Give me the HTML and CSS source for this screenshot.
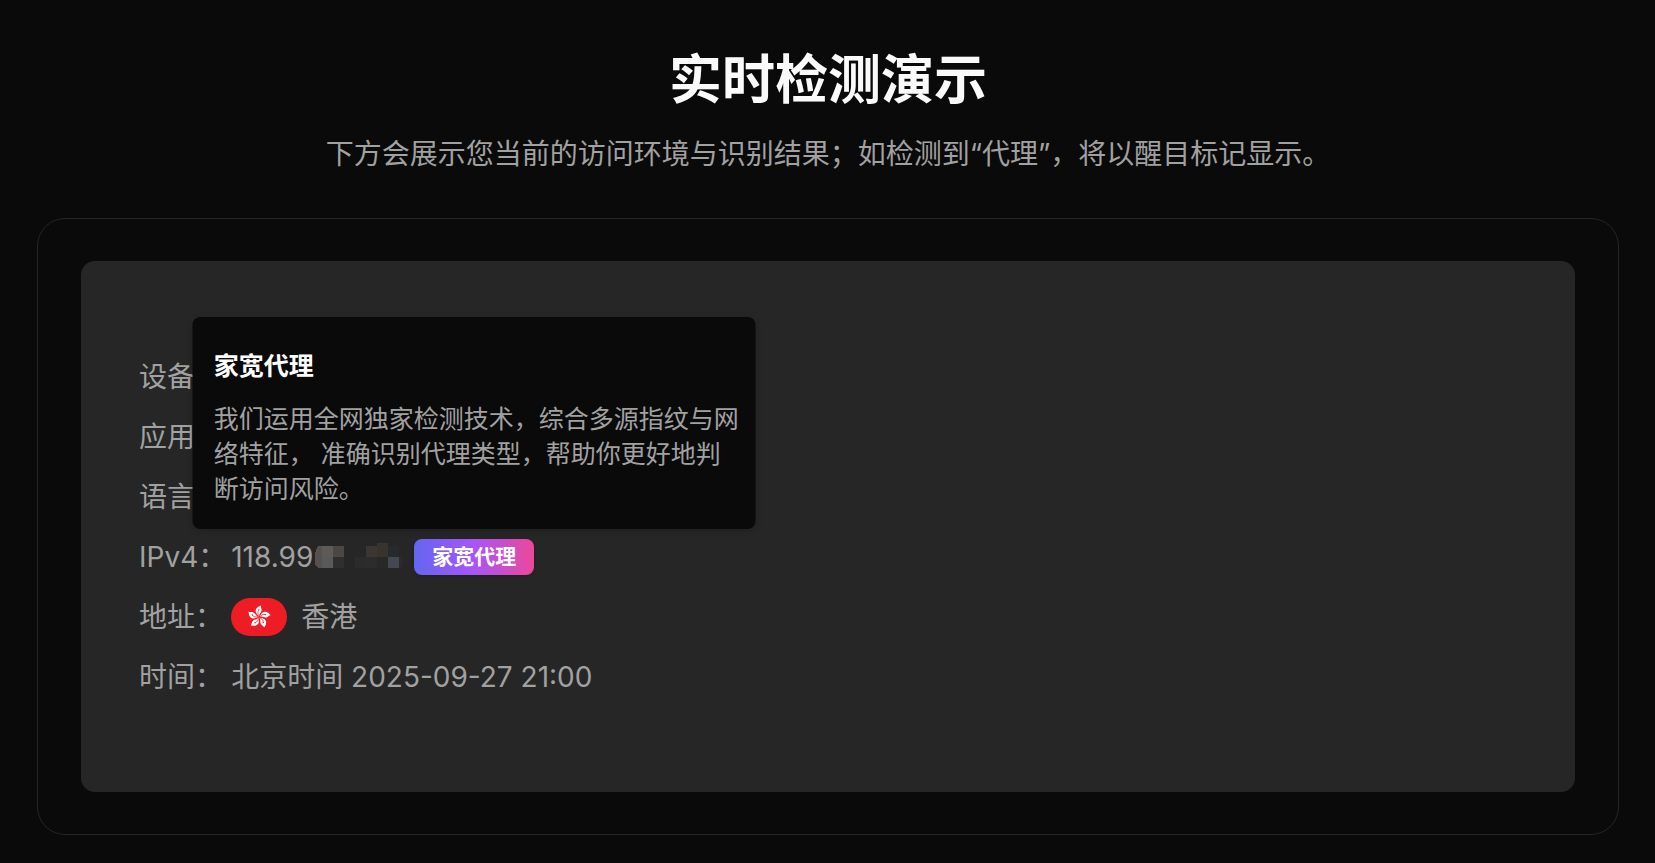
FILE: index.html
```
<!DOCTYPE html>
<html lang="zh-CN">
<head>
    <meta charset="UTF-8">
    <meta name="viewport" content="width=device-width, initial-scale=1.0">
    <title>实时检测演示</title>
    <link rel="stylesheet" href="styles.css">
</head>
<body>

    <main class="demo">
        <header class="demo-header">
            <h1>实时检测演示</h1>
            <p>下方会展示您当前的访问环境与识别结果；如检测到“代理”，将以醒目标记显示。</p>
        </header>

        <section class="card">
            <dl class="result">
                <dt>设备</dt>
                <dd></dd>

                <dt>应用</dt>
                <dd></dd>

                <dt>语言</dt>
                <dd></dd>

                <dt>IPv4：</dt>
                <dd>
                    <span class="ip">118.99</span>
                    <!-- IP 后两段打码 -->
                    <svg class="mask" width="90" height="28" viewBox="0 0 90 28" shape-rendering="crispEdges" aria-hidden="true">
                        <g transform="translate(1 -2)">
                            <path d="M8 5v22H4L1 23V12l3-7z" fill="#56514e"/>
                            <path d="M8 5h11v11H8z" fill="#5d5a58"/>
                            <path d="M8 16h11v11H8z" fill="#595959"/>
                            <path d="M19 5h11v11H19z" fill="#4b4744"/>
                            <path d="M19 16h11v11H19z" fill="#312f2d"/>
                            <path d="M41 16h11v11H41z" fill="#2c2b2b"/>
                            <path d="M52 5h11v11H52z" fill="#3b3632"/>
                            <path d="M52 16h11v11H52z" fill="#2e2c2b"/>
                            <path d="M63 2h11v14H63z" fill="#39332d"/>
                            <path d="M63 16h11v11H63z" fill="#282828"/>
                            <path d="M74 5h11v11H74z" fill="#272a2d"/>
                            <path d="M74 16h11v11H74z" fill="#444850"/>
                            <path d="M85 16h4v6l-2 5h-2z" fill="#2b2a2a"/>
                        </g>
                    </svg>
                    <span class="badge-wrap">
                        <button type="button" class="badge" aria-describedby="proxyTip">家宽代理</button>
                        <span class="tooltip" id="proxyTip" role="tooltip">
                            <strong>家宽代理</strong>
                            <span class="tooltip-text">我们运用全网独家检测技术，综合多源指纹与网络特征， 准确识别代理类型，帮助你更好地判断访问风险。</span>
                        </span>
                    </span>
                </dd>

                <dt>地址：</dt>
                <dd>
                    <svg class="flag" viewBox="0 0 56 38" aria-hidden="true">
                        <defs>
                            <g id="petal">
                                <path d="M0 -.6C-1.2 -2.4 -3.8 -3.8 -3.3 -7C-2.8 -9.4 -.4 -10.8 2 -11.6C1.4 -9.8 3 -9 2.6 -6.6C2.2 -4.4 .2 -3.6 0 -.6z" fill="#fff"/>
                                <path d="M0 -1.2C-1.4 -3 -1.4 -5 -.4 -6.6" fill="none" stroke="#ee1c25" stroke-width=".7"/>
                                <circle cx="-.2" cy="-7" r=".7" fill="#ee1c25"/>
                            </g>
                        </defs>
                        <rect width="56" height="38" fill="#ee1c25"/>
                        <g transform="translate(28 19)">
                            <use href="#petal"/>
                            <use href="#petal" transform="rotate(72)"/>
                            <use href="#petal" transform="rotate(144)"/>
                            <use href="#petal" transform="rotate(216)"/>
                            <use href="#petal" transform="rotate(288)"/>
                        </g>
                    </svg>
                    <span>香港</span>
                </dd>

                <dt>时间：</dt>
                <dd>北京时间 2025-09-27 21:00</dd>
            </dl>
        </section>
    </main>

</body>
</html>
```
FILE: styles.css
```
* {
    box-sizing: border-box;
}
body {
    margin: 0;
    background-color: #0a0a0a;
    color: #a1a1a1;
    font-family: Inter, "Noto Sans CJK SC", sans-serif;
    font-size: 28px;
    line-height: 44px;
}
.demo {
    padding: 48px 36px 28px 37px;
}
.demo-header {
    text-align: center;
    margin-bottom: 42px;
}
.demo-header h1 {
    margin: 0 0 20px;
    color: #fafafa;
    font-size: 53px;
    line-height: 64px;
    font-weight: 600;
}
.demo-header p {
    margin: 0;
}
.card {
    border: 1px solid #262626;
    border-radius: 28px;
    padding: 42px 43px;
}

/* 检测结果列表 */
.result {
    display: grid;
    grid-template-columns: auto 1fr;
    gap: 16px 5px;
    margin: 0;
    padding: 94px 58px 93px;
    border-radius: 14px;
    background-color: #262626;
}
.result dd {
    display: flex;
    align-items: center;
    margin: 0;
}
.flag {
    width: 56px;
    height: 38px;
    margin-right: 14px;
    border-radius: 19px;
}
.badge-wrap {
    position: relative;
    display: flex;
    margin-left: 11px;
}
.badge {
    height: 36px;
    padding: 0 18px;
    border: none;
    border-radius: 8px;
    background: linear-gradient(to right, #6366f1, #a855f7, #ec4899);
    box-shadow: 0 1px 3px rgba(0, 0, 0, 0.2);
    color: #fff;
    font-family: inherit;
    font-size: 21px;
    font-weight: 600;
    line-height: 28px;
    cursor: pointer;
}

/* 徽章上方的提示框 */
.tooltip {
    position: absolute;
    bottom: 100%;
    left: 50%;
    width: 563px;
    margin-bottom: 10px;
    padding: 32px 17px 22px 21px;
    transform: translateX(-50%);
    border-radius: 8px;
    background-color: #0a0a0a;
    box-shadow: 0 2px 6px rgba(0, 0, 0, 0.15);
    font-size: 25px;
    line-height: 35px;
}
.tooltip strong {
    display: block;
    margin-bottom: 18px;
    color: #fff;
    font-weight: 600;
}
.tooltip-text {
    display: block;
}
```
